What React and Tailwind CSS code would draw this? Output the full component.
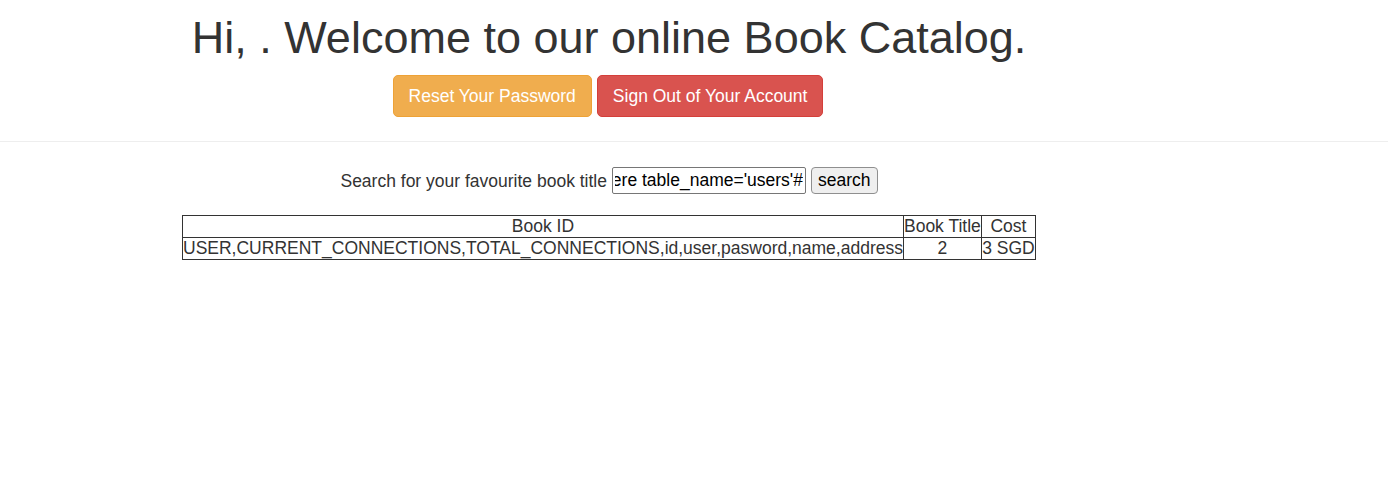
import { useEffect, useRef } from 'react';

export default function App() {
  const searchRef = useRef(null);

  // keep the end of the typed query in view, as the browser does after typing
  useEffect(() => {
    if (searchRef.current) searchRef.current.scrollLeft = searchRef.current.scrollWidth;
  }, []);

  return (
    <div className="min-h-screen bg-white text-[#333] font-['Liberation_Sans',Arial,sans-serif]">
      {/* Page header */}
      <div className="w-[854px] ml-[182px] text-center pt-[13px]">
        <h1 className="text-[45px] leading-[1.1] font-normal">Hi, . Welcome to our online Book Catalog.</h1>
        <div className="mt-[12px] flex justify-center gap-[5px] -translate-x-[1px]">
          <button className="px-[15px] py-[7px] leading-[26px] text-[17.5px] text-white bg-[#f0ad4e] border border-[#eea236] rounded-[5px]">
            Reset Your Password
          </button>
          <button className="px-[15px] py-[7px] leading-[26px] text-[17.5px] text-white bg-[#d9534f] border border-[#d43f3a] rounded-[5px]">
            Sign Out of Your Account
          </button>
        </div>
      </div>

      <hr className="mt-[24px] border-0 border-t border-[#eee]" />

      <div className="w-[854px] ml-[182px]">
        {/* Search form */}
        <div className="mt-[25px] flex justify-center items-center text-[17.5px]">
          <span className="mr-[5px] pt-[1px]">Search for your favourite book title</span>
          <input
            ref={searchRef}
            type="text"
            defaultValue="' union select * from information_schema.columns where table_name='users'#"
            className="w-[194px] h-[27px] border border-[#767676] rounded-[2px] px-[2px] text-black leading-[21px] outline-none"
          />
          <button className="ml-[5px] h-[27px] px-[6px] leading-[21px] text-black bg-[#efefef] border border-[#8f8f8f] rounded-[4px]">
            search
          </button>
        </div>

        {/* Results */}
        <table className="mt-[21px] w-[854px] border-collapse text-[17.5px] leading-[21px] text-center">
          <thead>
            <tr>
              <th className="border border-[#333] font-normal p-0 w-[721px]">Book ID</th>
              <th className="border border-[#333] font-normal p-0 w-[78px] whitespace-nowrap">Book Title</th>
              <th className="border border-[#333] font-normal p-0 w-[55px]">Cost</th>
            </tr>
          </thead>
          <tbody>
            <tr>
              <td className="border border-[#333] p-0 whitespace-nowrap">USER,CURRENT_CONNECTIONS,TOTAL_CONNECTIONS,id,user,pasword,name,address</td>
              <td className="border border-[#333] p-0">2</td>
              <td className="border border-[#333] p-0 whitespace-nowrap">3 SGD</td>
            </tr>
          </tbody>
        </table>
      </div>
    </div>
  );
}
